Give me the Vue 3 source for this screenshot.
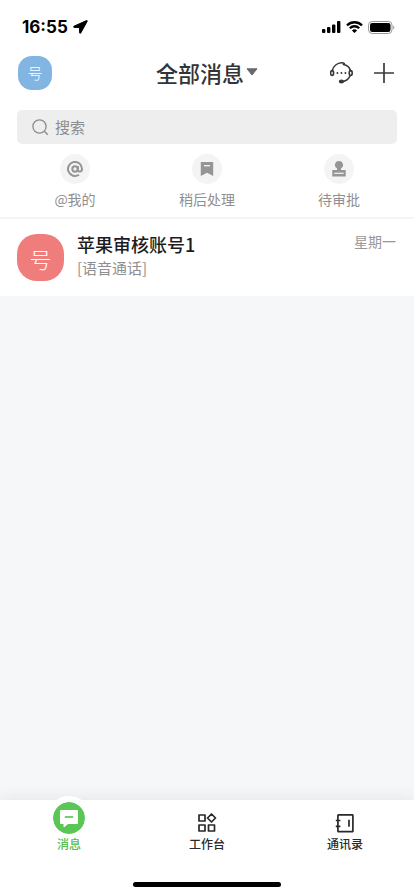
<script setup>
import { ref } from 'vue'

const query = ref('')
const activeTab = ref('messages')

const shortcuts = [
  { id: 'mention', label: '@我的' },
  { id: 'later', label: '稍后处理' },
  { id: 'approval', label: '待审批' }
]

const chats = [
  { id: 1, avatar: '号', name: '苹果审核账号1', preview: '[语音通话]', time: '星期一' }
]

const tabs = [
  { id: 'messages', label: '消息' },
  { id: 'workbench', label: '工作台' },
  { id: 'contacts', label: '通讯录' }
]
</script>

<template>
  <div class="app">
    <div class="status">
      <div class="status-side">
        <span class="clock">16:55</span>
        <svg width="15" height="14" viewBox="0 0 15 14" aria-hidden="true">
          <path d="M13.600.6 1 6.200c-.6.3-.5 1.200.2 1.200l5.300.1.1 5.200c0 .7.9.9 1.200.2L14.200 1.300c.2-.5-.1-.9-.6-.7z" fill="#000" stroke="#000" stroke-width="1" stroke-linejoin="round" />
        </svg>
      </div>
      <div class="status-side">
        <svg width="19" height="12" viewBox="0 0 19 12" aria-hidden="true">
          <rect x="0" y="8" width="3.400" height="4" rx="1" />
          <rect x="5" y="6" width="3.400" height="6" rx="1" />
          <rect x="10" y="3.400" width="3.400" height="8.600" rx="1" />
          <rect x="15" y="0" width="3.400" height="12" rx="1" />
        </svg>
        <svg width="17" height="12" viewBox="0 0 17 12" aria-hidden="true">
          <path d="M1 4.300a10.800 10.800 0 0 1 15 0M3.800 7.200a6.700 6.700 0 0 1 9.400 0" fill="none" stroke="#000" stroke-width="2.300" />
          <path d="M8.500 12 5.900 9.500a3.800 3.800 0 0 1 5.200 0z" />
        </svg>
        <svg width="27" height="13" viewBox="0 0 27 13" aria-hidden="true">
          <rect x=".5" y=".5" width="23.500" height="12" rx="3.700" fill="none" stroke="#999" />
          <rect x="2" y="2" width="20.500" height="9" rx="2.300" />
          <path d="M25.200 4.600c1.600.6 1.600 3.200 0 3.800z" fill="#999" />
        </svg>
      </div>
    </div>

    <header class="header">
      <div class="header-start">
        <button class="avatar avatar-small" type="button">号</button>
      </div>
      <button class="title" type="button">
        <span>全部消息</span>
        <svg width="12" height="8" viewBox="0 0 12 8" aria-hidden="true">
          <path d="M1 .8h10L6 7z" fill="#67686b" stroke="#67686b" stroke-linejoin="round" />
        </svg>
      </button>
      <div class="header-end">
        <button class="icon-button" type="button" aria-label="客服">
          <svg width="24" height="24" viewBox="0 0 24 24" fill="none" stroke="#36373a" stroke-width="1.600" stroke-linecap="round" stroke-linejoin="round" aria-hidden="true">
            <path d="M2.400 9.300C3.500 5.200 7.200 2.100 11.600 1.800c1.200-.1 2 .2 2.700.8l-.9.900c3.500.6 6.200 2.900 7 6" />
            <ellipse cx="2.100" cy="12" rx="1.500" ry="2.400" />
            <ellipse cx="20.700" cy="12" rx="1.500" ry="2.400" />
            <path d="M20 14.800c-1.200 3.200-3.700 5.100-7.200 5.800" />
            <ellipse cx="11.400" cy="20.500" rx="1.800" ry="1.200" fill="#36373a" />
            <path d="M7.400 12h.01M11.400 12h.01M15.400 12h.01" stroke-width="1.900" />
          </svg>
        </button>
        <button class="icon-button" type="button" aria-label="新建">
          <svg width="20" height="20" viewBox="0 0 20 20" aria-hidden="true">
            <path d="M10 0v20M0 10h20" fill="none" stroke="#3a3b3e" stroke-width="1.700" />
          </svg>
        </button>
      </div>
    </header>

    <div class="search">
      <svg width="17" height="17" viewBox="0 0 17 17" aria-hidden="true">
        <circle cx="7.500" cy="7.500" r="6.600" fill="none" stroke="#8c8d90" stroke-width="1.300" />
        <path d="m12.300 12.300 3.500 3.500" fill="none" stroke="#8c8d90" stroke-width="1.400" />
      </svg>
      <input v-model="query" type="text" placeholder="搜索" aria-label="搜索" />
    </div>

    <nav class="shortcuts">
      <button v-for="item in shortcuts" :key="item.id" class="shortcut" type="button">
        <span class="shortcut-icon">
          <svg v-if="item.id === 'mention'" width="16" height="16" viewBox="0 0 16 16" fill="none" stroke="#949596" stroke-width="2" aria-hidden="true">
            <circle cx="8" cy="8" r="2.700" />
            <path d="M10.900 5v4c0 2.300 4.100 2.300 4.100-1A7 7 0 1 0 12 13.700" />
          </svg>
          <svg v-else-if="item.id === 'later'" width="14" height="16" viewBox="0 0 14 16" aria-hidden="true">
            <path d="M.8 1h12.400v14L7 11.800.8 15z" fill="#949596" />
            <path d="M4 4.700h6" stroke="#f4f4f4" stroke-width="1.300" />
          </svg>
          <svg v-else width="14" height="16" viewBox="0 0 14 16" aria-hidden="true">
            <path d="M7 0a4 4 0 0 1 2 7.500V9h4.700v6.500H.3V9H5V7.500A4 4 0 0 1 7 0z" fill="#949596" />
            <path d="M2.300 12.300h9.400" stroke="#f4f4f4" stroke-width="1.200" />
          </svg>
        </span>
        <span>{{ item.label }}</span>
      </button>
    </nav>

    <main class="chats">
      <a v-for="chat in chats" :key="chat.id" class="chat" href="#">
        <span class="avatar avatar-large">{{ chat.avatar }}</span>
        <span class="chat-text">
          <span class="chat-name">{{ chat.name }}</span>
          <span class="chat-preview">{{ chat.preview }}</span>
        </span>
        <span class="chat-time">{{ chat.time }}</span>
      </a>
    </main>

    <footer class="footer">
      <nav class="tabs">
        <button
          v-for="tab in tabs"
          :key="tab.id"
          class="tab"
          :class="{ active: tab.id === activeTab }"
          type="button"
          @click="activeTab = tab.id"
        >
          <span class="tab-icon">
            <svg v-if="tab.id === 'messages'" width="20" height="19" viewBox="0 0 20 19" aria-hidden="true">
              <path d="M1.500 1.500h17v13H9L5 18v-3.500H1.500z" fill="currentColor" stroke="currentColor" stroke-linejoin="round" />
              <path class="dash" d="M5.800 8h8.400" stroke-width="1.700" />
            </svg>
            <svg v-else-if="tab.id === 'workbench'" width="20" height="20" viewBox="0 0 20 20" fill="none" stroke="currentColor" stroke-width="1.700" stroke-linejoin="round" aria-hidden="true">
              <rect x="2" y="2" width="6" height="6" />
              <rect x="2" y="12" width="6" height="6" />
              <rect x="11.500" y="12" width="6" height="6" />
              <path d="m14.500 1 4 4-4 4-4-4z" />
            </svg>
            <svg v-else width="20" height="20" viewBox="0 0 20 20" fill="none" stroke="currentColor" stroke-width="1.700" aria-hidden="true">
              <rect x="2.900" y="1.900" width="15" height="16.800" rx=".5" />
              <path d="M.8 7.500h4.600M.8 13.300h4.600M14 6.800v7" />
            </svg>
          </span>
          <span>{{ tab.label }}</span>
        </button>
      </nav>
      <div class="home-indicator"></div>
    </footer>
  </div>
</template>

<style>
body {
  background: #f6f7f9;
}
</style>

<style scoped>
.app {
  display: flex;
  flex-direction: column;
  min-height: 100vh;
  background: #fff;
  color: #333437;
  font-family: "Noto Sans CJK SC", "Noto Sans", sans-serif;
}

.app * {
  box-sizing: border-box;
}

svg {
  display: block;
  flex: none;
}

button {
  padding: 0;
  border: 0;
  background: none;
  color: inherit;
  font: inherit;
  cursor: pointer;
}

.status {
  display: flex;
  align-items: center;
  justify-content: space-between;
  height: 54px;
  padding: 0 19px 0 22px;
}

.status-side {
  display: flex;
  align-items: center;
  gap: 5px;
}

.clock {
  color: #000;
  font-family: Inter, sans-serif;
  font-size: 17px;
  font-weight: 700;
  line-height: 20px;
}

.header {
  display: grid;
  grid-template-columns: 1fr auto 1fr;
  align-items: center;
  height: 38px;
  padding: 0 20px 0 18px;
}

.header-end {
  display: flex;
  align-items: center;
  justify-content: flex-end;
  gap: 20px;
}

.avatar {
  display: flex;
  align-items: center;
  justify-content: center;
  flex: none;
  color: #fff;
  font-weight: 300;
}

.avatar-small {
  width: 34px;
  height: 34px;
  border-radius: 14px;
  background: #82b5e1;
  font-size: 15px;
  line-height: 34px;
}

.avatar-large {
  width: 47px;
  height: 47px;
  border-radius: 20px;
  background: #ef7d7c;
  font-size: 22px;
  line-height: 44px;
}

.title {
  display: flex;
  align-items: center;
  gap: 2px;
  padding: 0 0 2px 2px;
  font-size: 22px;
  font-weight: 500;
  line-height: 28px;
}

.search {
  display: flex;
  align-items: center;
  gap: 6px;
  height: 34px;
  margin: 18px 17px 10px;
  padding: 0 15px;
  border-radius: 5px;
  background: #eeeeee;
}

.search input {
  flex: 1;
  min-width: 0;
  padding: 0;
  border: 0;
  outline: 0;
  background: none;
  color: #333437;
  font: inherit;
  font-size: 15px;
  line-height: 22px;
}

.search input::placeholder {
  color: #8c8c8e;
  opacity: 1;
}

.shortcuts {
  display: grid;
  grid-template-columns: repeat(3, 1fr);
  padding: 0 9px 9px;
  border-bottom: 2px solid #f3f4f5;
}

.shortcut {
  display: flex;
  flex-direction: column;
  align-items: center;
  gap: 6px;
  color: #8f8f91;
  font-size: 14px;
  line-height: 18px;
}

.shortcut-icon {
  display: flex;
  align-items: center;
  justify-content: center;
  width: 30px;
  height: 30px;
  border-radius: 50%;
  background: #f4f4f4;
}

.chats {
  flex: 1;
  background: #f6f7f9;
}

.chat {
  display: flex;
  gap: 13px;
  padding: 15px 18px 15px 17px;
  background: #fff;
  color: inherit;
  text-decoration: none;
}

.chat-text {
  display: flex;
  flex: 1;
  flex-direction: column;
  gap: 3px;
  min-width: 0;
}

.chat-name {
  color: #1c1c1e;
  font-size: 18px;
  font-weight: 500;
  line-height: 20px;
}

.chat-preview {
  color: #8f8f91;
  font-size: 15px;
  line-height: 22px;
}

.chat-time {
  color: #979799;
  font-size: 14px;
  line-height: 14px;
}

.footer {
  position: sticky;
  bottom: 0;
  background: #fff;
  box-shadow: 0 -2px 14px rgba(40, 50, 60, 0.09);
}

.tabs {
  display: grid;
  grid-template-columns: repeat(3, 1fr);
}

.tab {
  display: flex;
  flex-direction: column;
  align-items: center;
  color: #29292b;
  font-size: 12px;
  font-weight: 500;
  line-height: 14px;
}

.tab-icon {
  display: flex;
  align-items: center;
  justify-content: center;
  width: 44px;
  height: 44px;
  margin: -4px 0 -3px;
  padding-top: 10px;
  border-radius: 50%;
}

.active {
  color: #56bd4f;
}

.active .tab-icon {
  padding: 0;
  border: 6px solid #fff;
  background: #5ac656;
  background-clip: padding-box;
  color: #fff;
}

.dash {
  stroke: #5ac656;
}

.home-indicator {
  width: 148px;
  height: 5px;
  margin: 31px auto 9px;
  border-radius: 3px;
  background: #000;
}
</style>
